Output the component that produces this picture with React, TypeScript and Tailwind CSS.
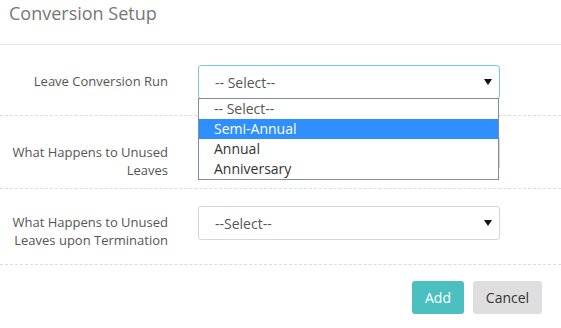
const font = { fontFamily: '"Open Sans", "Liberation Sans", sans-serif' };

function Caret() {
  return (
    <svg width="8" height="7" viewBox="0 0 8 7" className="absolute right-[7px] top-1/2 -translate-y-1/2">
      <path d="M0 0.5 L8 0.5 L4 6.5 Z" fill="#111" />
    </svg>
  );
}

function FakeSelect({ text, focused }: { text: string; focused?: boolean }) {
  return (
    <div
      className={`relative w-[302px] h-[34px] rounded-[3px] bg-white flex items-center pl-[16px] text-[14px] text-[#555] border ${
        focused ? "border-[#7ec9cf]" : "border-[#d6d6d6]"
      }`}
    >
      {text}
      <Caret />
    </div>
  );
}

function Row({
  label,
  text,
  h,
  focused,
  children,
}: {
  label: string[];
  text: string;
  h: string;
  focused?: boolean;
  children?: React.ReactNode;
}) {
  return (
    <div className={`flex items-start border-b border-dashed border-[#dcdcdc] ${h}`}>
      <div className="w-[168px] shrink-0 text-right text-[13px] leading-[18px] text-[#555] pt-[7px]">
        {label.map((l) => (
          <div key={l}>{l}</div>
        ))}
      </div>
      <div className="ml-[30px] relative">
        <FakeSelect text={text} focused={focused} />
        {children}
      </div>
    </div>
  );
}

export default function App() {
  return (
    <div className="w-[561px] h-[328px] bg-white overflow-hidden" style={font}>
      <div className="h-[45px] border-b border-[#e8e8e8] pl-[9px] pt-[1px] text-[18px] text-[#777] leading-[24px]">
        Conversion Setup
      </div>
      <Row label={["Leave Conversion Run"]} text="-- Select--" h="h-[71px] pt-[20px]" focused>
        <div className="absolute left-0 top-[33px] w-[301px] border border-[#7b8ea6] bg-white text-[14px] leading-[20px] text-[#333] z-10">
          <div className="pl-[15px] text-[#555]">-- Select--</div>
          <div className="pl-[15px] bg-[#2f8fff] text-white">Semi-Annual</div>
          <div className="pl-[15px]">Annual</div>
          <div className="pl-[15px]">Anniversary</div>
        </div>
      </Row>
      <Row label={["What Happens to Unused", "Leaves"]} text="--Select--" h="h-[73px] pt-[20px]" />
      <Row
        label={["What Happens to Unused", "Leaves upon Termination"]}
        text="--Select--"
        h="h-[76px] pt-[17px]"
      />
      <div className="flex justify-end gap-[9px] pr-[19px] pt-[16px]">
        <button className="w-[52px] h-[33px] rounded-[3px] bg-[#4cbfc0] text-white text-[14px]">Add</button>
        <button className="w-[69px] h-[33px] rounded-[3px] bg-[#dedede] text-[#333] text-[14px]">Cancel</button>
      </div>
    </div>
  );
}
